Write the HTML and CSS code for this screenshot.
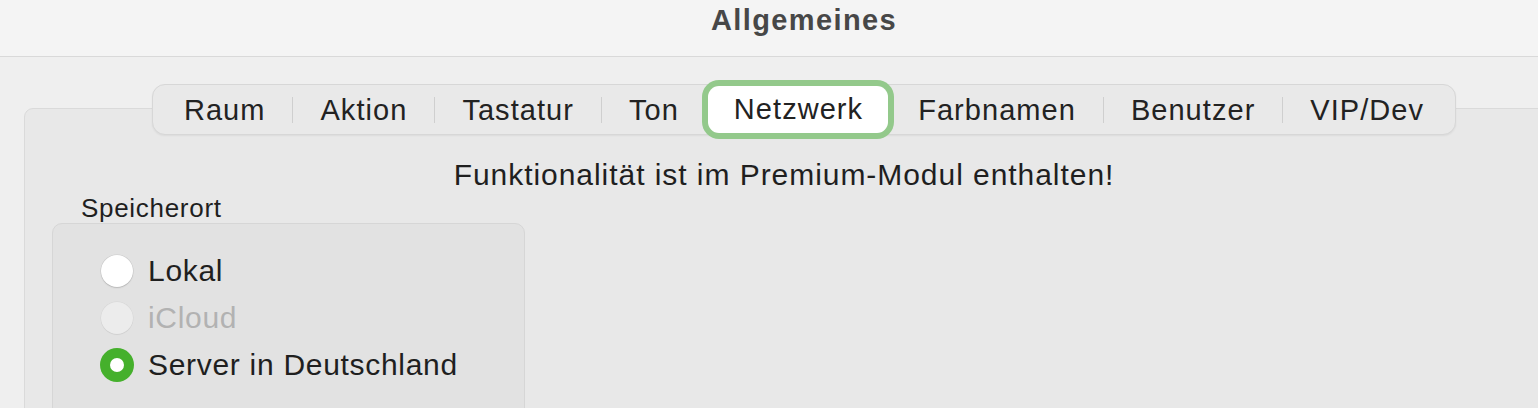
FILE: index.html
```html
<!DOCTYPE html>
<html lang="de">
<head>
<meta charset="utf-8">
<title>Allgemeines</title>
<link rel="stylesheet" href="styles.css">
</head>
<body>
<div class="window">
  <header class="titlebar"><h1 class="title">Allgemeines</h1></header>
  <main class="content">
    <nav class="tabs">
      <span class="tab">Raum</span><span class="sep"></span>
      <span class="tab">Aktion</span><span class="sep"></span>
      <span class="tab">Tastatur</span><span class="sep"></span>
      <span class="tab">Ton</span>
      <span class="tab selected">Netzwerk</span>
      <span class="tab">Farbnamen</span><span class="sep"></span>
      <span class="tab">Benutzer</span><span class="sep"></span>
      <span class="tab">VIP/Dev</span>
    </nav>
    <section class="panel">
      <p class="notice">Funktionalität ist im Premium-Modul enthalten!</p>
      <div class="group">
        <div class="group-label">Speicherort</div>
        <div class="group-box">
          <div class="radio"><span class="dot"></span><span class="label">Lokal</span></div>
          <div class="radio disabled"><span class="dot"></span><span class="label">iCloud</span></div>
          <div class="radio checked"><span class="dot"></span><span class="label">Server in Deutschland</span></div>
        </div>
      </div>
    </section>
  </main>
</div>
</body>
</html>
```
FILE: styles.css
```css
html, body {
  margin: 0;
  padding: 0;
}
body {
  background: #efefef;
  overflow: hidden;
  font-family: "Liberation Sans", Arial, sans-serif;
  color: #1f1f1f;
}
.window {
  width: 1608px;
}
.titlebar {
  height: 56px;
  background: #f4f4f4;
  border-bottom: 1px solid #d9d9d9;
  display: flex;
  justify-content: center;
  align-items: flex-start;
}
.title {
  margin: 0;
  padding-top: 3px;
  font-size: 29px;
  line-height: 34px;
  font-weight: bold;
  color: #474747;
  letter-spacing: 1.4px;
}
.content {
  padding-top: 27px;
}
.tabs {
  position: relative;
  z-index: 1;
  display: flex;
  align-items: center;
  width: max-content;
  margin: 0 auto;
  height: 49px;
  padding: 0 4px;
  background: #e9e9e9;
  border: 1px solid #d7d7d7;
  border-radius: 13px;
  box-shadow: 0 1px 2px rgba(0,0,0,0.06);
}
.tab {
  padding: 0 27px;
  font-size: 29px;
  line-height: 46px;
  letter-spacing: 1.05px;
  color: #222;
}
.tab.selected {
  margin: 0 3px 0 2px;
  padding: 0 25px 0 26px;
  height: 47px;
  background: #fff;
  border-radius: 11px;
  box-shadow: 0 0 0 6px #93c98b;
}
.sep {
  width: 1px;
  height: 26px;
  background: #cfcfcf;
}
.panel {
  margin: -27px 24px 0;
  min-height: 330px;
  background: #e8e8e8;
  border: 1px solid #dadada;
  border-radius: 9px;
}
.notice {
  margin: 0;
  padding: 48px 40px 0 0;
  text-align: center;
  font-size: 30px;
  line-height: 36px;
  letter-spacing: 0.95px;
}
.group {
  margin-left: 27px;
}
.group-label {
  padding-left: 29px;
  margin-bottom: 0;
  font-size: 26px;
  line-height: 30px;
  letter-spacing: 0.7px;
}
.group-box {
  width: 471px;
  min-height: 200px;
  padding-top: 23px;
  background: #e2e2e2;
  border: 1px solid #d6d6d6;
  border-radius: 10px;
}
.radio {
  display: flex;
  align-items: center;
  height: 47px;
  padding-left: 48px;
  font-size: 30px;
  letter-spacing: 0.7px;
}
.dot {
  box-sizing: border-box;
  width: 32px;
  height: 32px;
  margin-right: 15px;
  border-radius: 50%;
  background: #ffffff;
  box-shadow: 0 0 0 0.5px rgba(0,0,0,0.10), 0 1px 1.5px rgba(0,0,0,0.14);
  display: flex;
  align-items: center;
  justify-content: center;
}
.radio.disabled .dot {
  background: #ececec;
  box-shadow: 0 0 0 0.5px rgba(0,0,0,0.05), 0 1px 1px rgba(0,0,0,0.05);
}
.radio.disabled .label {
  color: #b2b2b2;
}
.radio.checked .dot {
  width: 34px;
  height: 34px;
  margin-left: -1px;
  margin-right: 14px;
  background: #45b02c;
  box-shadow: none;
}
.radio.checked .dot::after {
  content: "";
  width: 14px;
  height: 14px;
  border-radius: 50%;
  background: #fff;
}
```
